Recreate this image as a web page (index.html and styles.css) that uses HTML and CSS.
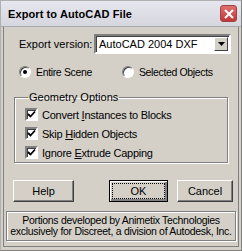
FILE: index.html
```html
<!DOCTYPE html>
<html>
<head>
<meta charset="utf-8">
<link rel="stylesheet" href="styles.css">
</head>
<body>
<div class="window">
  <div class="titlebar">
    <span class="title">Export to AutoCAD File</span>
    <span class="close"><svg width="10" height="10" viewBox="0 0 10 10"><path d="M1 1L9 9M9 1L1 9" stroke="#fff" stroke-width="2"/></svg></span>
  </div>
  <div class="content">
    <div class="row version">
      <span class="label">Export version:</span>
      <div class="select">
        <span class="select-text">AutoCAD 2004 DXF</span>
        <span class="arrow"><svg width="7" height="4" viewBox="0 0 7 4"><path d="M0 0H7L3.5 4Z" fill="#000"/></svg></span>
      </div>
    </div>
    <div class="row radios">
      <label class="radio"><span class="dot on"></span><span class="txt">Entire Scene</span></label>
      <label class="radio second"><span class="dot"></span><span class="txt">Selected Objects</span></label>
    </div>
    <fieldset class="group">
      <legend>Geometry Options</legend>
      <div class="check"><span class="box"><svg width="9" height="9" viewBox="0 0 9 9"><path d="M1 4L3.5 6.5L8 1.5" fill="none" stroke="#000" stroke-width="1.8"/></svg></span><span class="txt">Convert <u>I</u>nstances to Blocks</span></div>
      <div class="check"><span class="box"><svg width="9" height="9" viewBox="0 0 9 9"><path d="M1 4L3.5 6.5L8 1.5" fill="none" stroke="#000" stroke-width="1.8"/></svg></span><span class="txt">Skip <u>H</u>idden Objects</span></div>
      <div class="check"><span class="box"><svg width="9" height="9" viewBox="0 0 9 9"><path d="M1 4L3.5 6.5L8 1.5" fill="none" stroke="#000" stroke-width="1.8"/></svg></span><span class="txt">Ignore <u>E</u>xtrude Capping</span></div>
    </fieldset>
    <div class="buttons">
      <button class="btn help">Help</button>
      <button class="btn ok"><span class="focus">OK</span></button>
      <button class="btn cancel">Cancel</button>
    </div>
    <div class="footer">Portions developed by Animetix Technologies<br>exclusively for Discreet, a division of Autodesk, Inc.</div>
  </div>
</div>
</body>
</html>
```
FILE: styles.css
```css
html, body {
  margin: 0;
  padding: 0;
  background: #d6d6d6;
}
body {
  width: 242px;
  height: 251px;
  overflow: hidden;
  font-family: "Liberation Sans", Arial, sans-serif;
  font-size: 11px;
  color: #000;
}
.window {
  box-sizing: border-box;
  width: 242px;
  height: 251px;
  border: 1px solid #808080;
  border-left-color: #b0b0b0;
  border-top-color: #b0b0b0;
  background: #d4d0c8;
  display: flex;
  flex-direction: column;
  padding: 0 2px 3px 2px;
}
.titlebar {
  height: 25px;
  flex: none;
  display: flex;
  align-items: center;
  justify-content: space-between;
  background: linear-gradient(#e6e6ee, #d6d6de);
  margin: 0 -2px;
  padding: 0 4px 0 7px;
  border-bottom: 1px solid #a8a8b0;
}
.title {
  font-weight: bold;
  font-size: 11px;
  letter-spacing: 0.1px;
}
.close {
  width: 17px;
  height: 17px;
  box-sizing: border-box;
  border-radius: 3px;
  background: linear-gradient(#e07070, #c03838);
  border: 1px solid #a04040;
  display: flex;
  align-items: center;
  justify-content: center;
}
.content {
  flex: 1;
  border: 1px solid #808080;
  border-top: none;
  background: #d4d0c8;
  padding: 7px 4px 0 4px;
  display: flex;
  flex-direction: column;
}
.row {
  display: flex;
  align-items: center;
}
.txt {
  white-space: pre;
}
.version .label {
  margin-left: 11px;
  width: 75px;
  white-space: nowrap;
}
.select {
  width: 137px;
  height: 20px;
  box-sizing: border-box;
  background: #fff;
  border: 2px solid;
  border-color: #808080 #ffffff #ffffff #808080;
  box-shadow: inset 1px 1px 0 #404040;
  display: flex;
  align-items: center;
  justify-content: space-between;
}
.select-text {
  padding-left: 3px;
}
.arrow {
  width: 14px;
  height: 14px;
  box-sizing: border-box;
  margin-right: 1px;
  background: #d4d0c8;
  border: 1px solid;
  border-color: #ffffff #404040 #404040 #ffffff;
  display: flex;
  align-items: center;
  justify-content: center;
}
.radios {
  margin-top: 11px;
  height: 14px;
}
.radio {
  display: flex;
  align-items: center;
  margin-left: 11px;
}
.radio .txt {
  font-size: 10.5px;
  letter-spacing: -0.35px;
}
.radio.second {
  margin-left: 30px;
}
.dot {
  flex: none;
  width: 12px;
  height: 12px;
  box-sizing: border-box;
  border-radius: 50%;
  background: #fff;
  border: 1px solid;
  border-color: #808080 #ffffff #ffffff #808080;
  box-shadow: inset 1px 1px 0 #404040;
  margin-right: 5px;
  position: relative;
}
.dot.on::after {
  content: "";
  position: absolute;
  left: 3px;
  top: 3px;
  width: 4px;
  height: 4px;
  border-radius: 50%;
  background: #000;
}
.group {
  margin: 12px 6px 0 6px;
  padding: 2px 0 6px 10px;
  height: 72px;
  box-sizing: border-box;
  border: 1px solid #808080;
  box-shadow: 1px 1px 0 #fff, inset 1px 1px 0 #fff;
}
.group legend {
  padding: 0 1px;
  margin-left: 3px;
}
.check {
  display: flex;
  align-items: center;
  height: 19px;
}
.check .txt {
  letter-spacing: -0.25px;
}
.box {
  flex: none;
  width: 13px;
  height: 13px;
  box-sizing: border-box;
  background: #fff;
  border: 2px solid;
  border-color: #808080 #ffffff #ffffff #808080;
  box-shadow: inset 1px 1px 0 #404040;
  margin-right: 4px;
  display: flex;
  align-items: center;
  justify-content: center;
}
.box svg {
  margin-left: -1px;
  margin-top: -1px;
}
.buttons {
  display: flex;
  margin-top: 17px;
  height: 22px;
}
.btn {
  box-sizing: border-box;
  height: 22px;
  font-family: inherit;
  font-size: 11px;
  color: #000;
  background: #d4d0c8;
  border: 1px solid;
  border-color: #ffffff #404040 #404040 #ffffff;
  box-shadow: inset -1px -1px 0 #808080;
  padding: 0;
}
.help {
  width: 61px;
  margin-left: 5px;
}
.ok {
  width: 59px;
  margin-left: 35px;
  border: 1px solid #000;
  box-shadow: inset 1px 1px 0 #fff, inset -2px -2px 0 #808080;
  display: flex;
  align-items: center;
  justify-content: center;
}
.focus {
  display: flex;
  align-items: center;
  justify-content: center;
  width: 51px;
  height: 14px;
  border: 1px dotted #000;
}
.cancel {
  width: 56px;
  margin-left: 9px;
}
.footer {
  margin: 9px -2px 0 -2px;
  height: 30px;
  box-sizing: border-box;
  border: 1px solid #808080;
  box-shadow: inset 1px 1px 0 #fff, 1px 1px 0 #fff;
  text-align: center;
  line-height: 11px;
  padding-top: 3px;
  font-size: 10.5px;
  letter-spacing: -0.3px;
  white-space: nowrap;
}
```
